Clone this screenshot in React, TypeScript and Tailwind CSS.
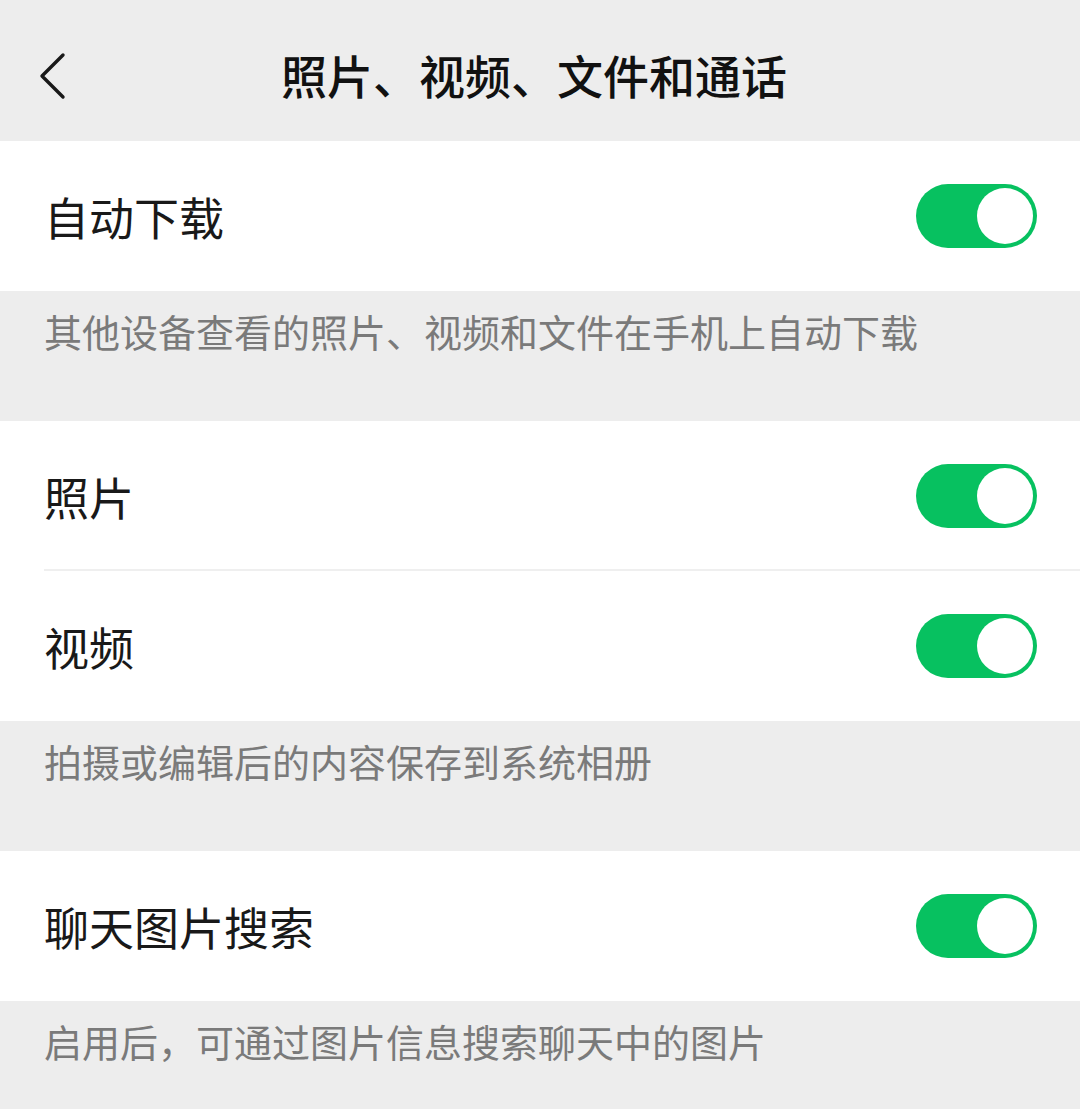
const font = {
  fontFamily: '"Noto Sans CJK SC", "Noto Sans", sans-serif',
};

function Toggle() {
  return (
    <span className="flex h-[64px] w-[121px] items-center justify-end rounded-full bg-[#07c160] pr-[4px]">
      <span className="h-[56px] w-[56px] rounded-full bg-white" />
    </span>
  );
}

function Row({ label, divider }: { label: string; divider?: boolean }) {
  return (
    <div className="relative flex h-[150px] items-center justify-between bg-white pl-[44px] pr-[43px]">
      <span className="text-[45px] leading-none text-[#191919]">{label}</span>
      <Toggle />
      {divider && (
        <span className="absolute bottom-0 left-[44px] right-0 h-[2px] bg-[#efefef]" />
      )}
    </div>
  );
}

function Note({ text, tall = true }: { text: string; tall?: boolean }) {
  return (
    <div
      className={`bg-[#ededed] pl-[44px] pt-[18px] ${tall ? "h-[130px]" : "h-[107px]"}`}
    >
      <p className="text-[38px] leading-[44px] text-[#7a7a7a]">{text}</p>
    </div>
  );
}

export default function App() {
  return (
    <div className="min-h-[1109px] w-[1080px] bg-[#ededed]" style={font}>
      <header className="relative flex h-[141px] items-center justify-center bg-[#ededed] pt-[6px]">
        <svg
          className="absolute left-[38px] top-[52px]"
          width="30"
          height="48"
          viewBox="0 0 30 48"
          fill="none"
          stroke="#191919"
          strokeWidth="3.4"
          strokeLinecap="round"
          strokeLinejoin="round"
        >
          <path d="M25 3 4 24l21 21" />
        </svg>
        <h1 className="pr-[12px] text-[46px] font-medium leading-none text-[#111]">
          照片、视频、文件和通话
        </h1>
      </header>

      <Row label="自动下载" />
      <Note text="其他设备查看的照片、视频和文件在手机上自动下载" />

      <Row label="照片" divider />
      <Row label="视频" />
      <Note text="拍摄或编辑后的内容保存到系统相册" />

      <Row label="聊天图片搜索" />
      <Note text="启用后，可通过图片信息搜索聊天中的图片" tall={false} />
    </div>
  );
}
